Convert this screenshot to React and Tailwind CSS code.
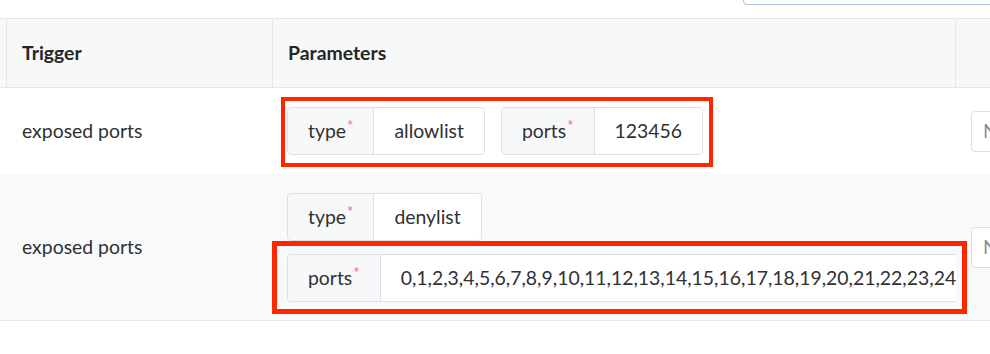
import React from 'react';

const rows = [
  {
    trigger: 'exposed ports',
    stacked: false,
    params: [
      { name: 'type', value: 'allowlist' },
      { name: 'ports', value: '123456' },
    ],
  },
  {
    trigger: 'exposed ports',
    stacked: true,
    params: [
      { name: 'type', value: 'denylist' },
      {
        name: 'ports',
        value: Array.from({ length: 40 }, (_, i) => i).join(','),
        wide: true,
      },
    ],
  },
];

function ParamGroup({ name, value, wide }) {
  return (
    <div
      className={
        'flex h-[48px] rounded-[4px] border border-[#dcdfe6] shrink-0 ' +
        (wide ? 'w-[720px]' : 'w-fit')
      }
    >
      <div className="flex items-center px-5 bg-[#f7f8fa] border-r border-[#dcdfe6] rounded-l-[4px] text-[#303133]">
        <span>{name}</span>
        <span className="text-[#f56c6c] text-[15px] leading-none self-start mt-[10px] ml-[1px]">*</span>
      </div>
      <div className="flex items-center px-5 bg-white rounded-r-[4px] text-[#303133] whitespace-nowrap overflow-hidden">
        {value}
      </div>
    </div>
  );
}

export default function App() {
  return (
    <div
      className="relative w-[990px] h-[354px] bg-white overflow-hidden text-[19.4px]"
      style={{ fontFamily: 'Lato, "Noto Sans", sans-serif' }}
    >
      <div className="h-[18px] flex justify-end overflow-hidden">
        <div className="w-[260px] h-[36px] -mt-[31px] border border-[#a7c6e8] rounded-[4px] shrink-0 -mr-[13px]" />
      </div>

      <div className="grid grid-cols-[7px_266px_683px_1fr]">
        {/* header */}
        <div className="h-[70px] bg-[#f7f8fa] border-y border-r border-[#e4e6ea]" />
        <div className="h-[70px] bg-[#f7f8fa] border-y border-r border-[#e4e6ea] flex items-center px-[15px] font-bold text-[#262626]">
          Trigger
        </div>
        <div className="h-[70px] bg-[#f7f8fa] border-y border-r border-[#e4e6ea] flex items-center px-[15px] font-bold text-[#262626]">
          Parameters
        </div>
        <div className="h-[70px] bg-[#f7f8fa] border-y border-[#e4e6ea]" />

        {rows.map((row, i) => {
          const rowCls =
            i === 0
              ? 'h-[86px] bg-white'
              : 'h-[147px] bg-[#f8f9fb] border-b border-[#e4e6ea]';
          return (
            <React.Fragment key={i}>
              <div className={rowCls} />
              <div className={rowCls + ' flex items-center px-[15px] text-[#303133]'}>
                {row.trigger}
              </div>
              <div className={rowCls + ' flex items-center pl-[14px] overflow-hidden'}>
                <div
                  className={
                    row.stacked
                      ? 'flex flex-col items-start gap-[13px]'
                      : 'flex items-center gap-4'
                  }
                >
                  {row.params.map((p) => (
                    <ParamGroup key={p.name} {...p} />
                  ))}
                </div>
              </div>
              <div className={rowCls + ' flex items-center pl-[15px] overflow-hidden'}>
                <div className="h-[41px] w-[80px] shrink-0 border border-[#dcdfe6] rounded-[4px] bg-white flex items-center px-[11px] text-[#8a8d93]">
                  None
                </div>
              </div>
            </React.Fragment>
          );
        })}
      </div>

      {/* annotation boxes */}
      <div className="absolute left-[281px] top-[97px] w-[432px] h-[70px] border-4 border-[#ff2600] pointer-events-none" />
      <div className="absolute left-[272px] top-[241px] w-[695px] h-[73px] border-[5px] border-[#ff2600] pointer-events-none" />
    </div>
  );
}
